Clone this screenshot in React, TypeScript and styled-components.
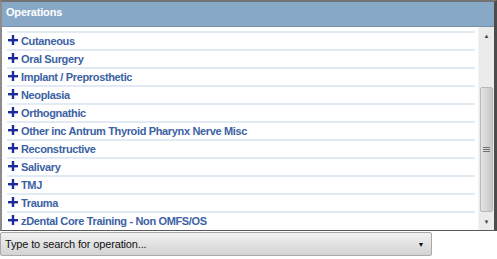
import styled, { createGlobalStyle } from "styled-components";

const GlobalStyle = createGlobalStyle`
  body {
    margin: 0;
    background: #ffffff;
    font-family: "Liberation Sans", Arial, sans-serif;
  }
`;

const Panel = styled.section`
  width: 497px;
  box-sizing: border-box;
  border-top: 2px solid #727272;
  border-left: 2px solid #8c8c8c;
  border-right: 3px solid #4c4c4c;
  border-bottom: 1px solid #5a5a5a;
`;

const Header = styled.div`
  height: 25px;
  box-sizing: border-box;
  padding: 4px 0 0 4px;
  background: #88a8c8;
  border-bottom: 1px solid #7990aa;
  color: #ffffff;
  font-size: 11px;
  font-weight: bold;
  letter-spacing: -0.2px;
`;

const Body = styled.div`
  display: flex;
  height: 203px;
`;

const List = styled.ul`
  flex: 1;
  margin: 0;
  padding: 4px 3px 0 5px;
  list-style: none;
`;

const Row = styled.li`
  display: flex;
  align-items: center;
  height: 18px;
  box-sizing: border-box;
  border-top: 2px solid #e2eaf3;
  padding-left: 1px;
  color: #3b62a4;
  font-size: 11px;
  font-weight: bold;
  letter-spacing: -0.35px;

  svg {
    margin: -2px 3px 0 0;
    flex: none;
  }
`;

const Scrollbar = styled.div`
  width: 15px;
  display: flex;
  flex-direction: column;
  background: #ebebeb;
  border-left: 1px solid #f4f4f4;
`;

const Arrow = styled.div<{ $down?: boolean }>`
  height: 17px;
  display: flex;
  align-items: center;
  justify-content: center;
  color: #444;
  font-size: 6px;
  margin-top: ${({ $down }) => ($down ? "auto" : "0")};
`;

const Thumb = styled.div`
  margin: 43px 1px 0 1px;
  height: 125px;
  box-sizing: border-box;
  border: 1px solid #b8b8b8;
  border-radius: 2px;
  background: linear-gradient(to right, #e4e4e4, #d2d2d2 60%, #c8c8c8);
  display: flex;
  flex-direction: column;
  justify-content: center;
  align-items: center;
  gap: 1px;
`;

const Grip = styled.span`
  width: 7px;
  height: 1px;
  background: #707070;
`;

const Combo = styled.div`
  margin-top: 1px;
  width: 432px;
  height: 24px;
  box-sizing: border-box;
  display: flex;
  align-items: center;
  border: 1px solid #a9a9a9;
  border-radius: 2px;
  background: linear-gradient(to bottom, #f2f2f2, #e2e2e2 50%, #d4d4d4);
`;

const ComboText = styled.span`
  flex: 1;
  padding-left: 4px;
  color: #111;
  font-size: 11px;
  letter-spacing: -0.15px;
`;

const ComboButton = styled.span`
  width: 20px;
  height: 100%;
  display: flex;
  align-items: center;
  justify-content: center;
  color: #111;
  font-size: 7px;
`;

const PlusIcon = () => (
  <svg width="10" height="10" viewBox="0 0 10 10">
    <rect x="0" y="4" width="10" height="2.4" fill="#1b2c9c" />
    <rect x="3.8" y="0" width="2.4" height="10" fill="#1b2c9c" />
  </svg>
);

const items = [
  "Cutaneous",
  "Oral Surgery",
  "Implant / Preprosthetic",
  "Neoplasia",
  "Orthognathic",
  "Other inc Antrum Thyroid Pharynx Nerve Misc",
  "Reconstructive",
  "Salivary",
  "TMJ",
  "Trauma",
  "zDental Core Training - Non OMFS/OS",
];

const App: React.FC = () => {
  return (
    <>
      <GlobalStyle />
      <Panel>
        <Header>Operations</Header>
        <Body>
          <List>
            {items.map((name) => (
              <Row key={name}>
                <PlusIcon />
                {name}
              </Row>
            ))}
          </List>
          <Scrollbar>
            <Arrow>▲</Arrow>
            <Thumb>
              <Grip />
              <Grip />
              <Grip />
            </Thumb>
            <Arrow $down>▼</Arrow>
          </Scrollbar>
        </Body>
      </Panel>
      <Combo>
        <ComboText>Type to search for operation...</ComboText>
        <ComboButton>▼</ComboButton>
      </Combo>
    </>
  );
};

export default App;
